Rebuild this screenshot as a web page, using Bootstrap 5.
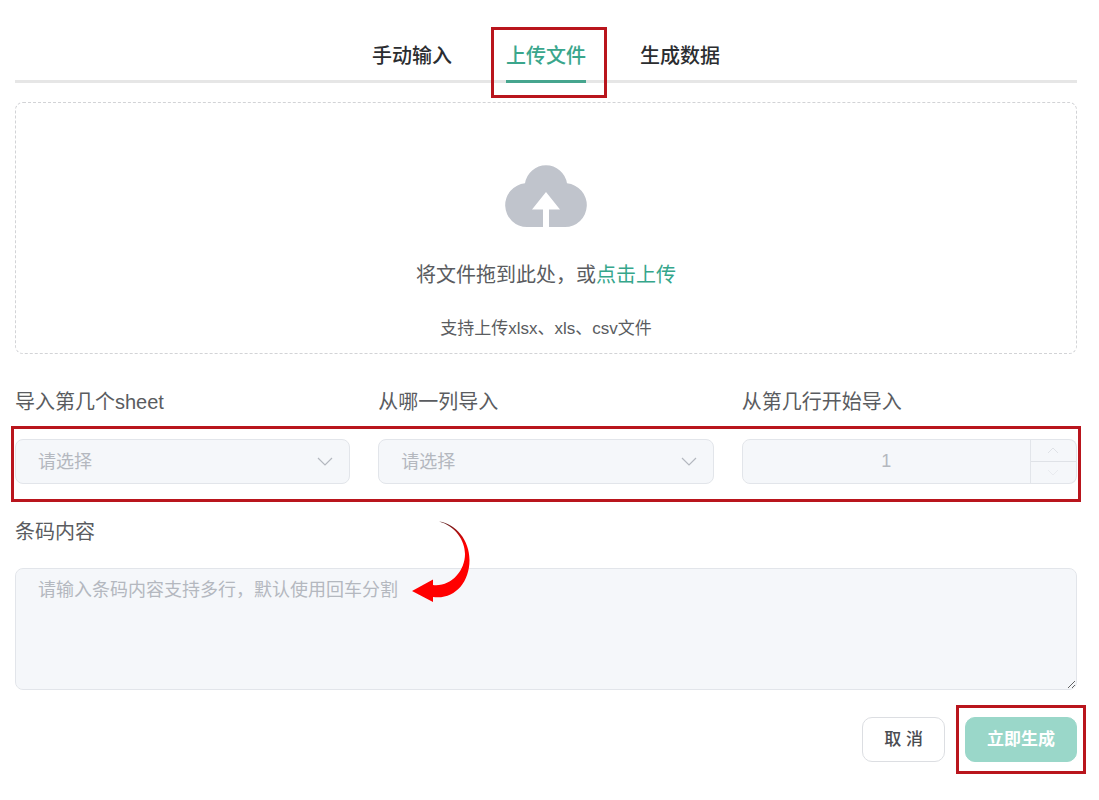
<!DOCTYPE html>
<html lang="zh-CN">
<head>
<meta charset="utf-8">
<meta name="viewport" content="width=device-width, initial-scale=1">
<title>上传文件</title>
<link href="https://cdn.jsdelivr.net/npm/bootstrap@5.3.0/dist/css/bootstrap.min.css" rel="stylesheet">
<style>
  body { font-family: "Liberation Sans", "Noto Sans CJK SC", sans-serif; font-size: 20px; line-height: 28px; color: #5a5c60; background: #fff; }
  .page { padding: 27px 22px 24px 15px; }
  .tab-bar { gap: 54px; box-shadow: inset 0 -3px #e6e6e6; }
  .tab-bar .nav-link { position: relative; padding: 15px 0 10px; border: 0; border-bottom: 3px solid transparent; border-radius: 0; color: #2b2d30; font-weight: 500; line-height: 28px; }
  .tab-bar .nav-link.active { color: #3aa68c; border-bottom-color: #46a58e; background: none; }
  .marker { position: absolute; border: 3px solid #b9151d; pointer-events: none; }
  .marker-tab { inset: 0 -21px -18px -15px; }
  .marker-fields { inset: auto -4px -18px -4px; height: 76px; }
  .marker-submit { inset: -12px -9px; }
  .drop-zone { margin-top: 19px; height: 252px; padding-top: 62px; border: 1px dashed #d2d3d6; border-radius: 8px; }
  .drop-zone a { color: #35a68b; text-decoration: none; }
  .drop-text { margin-top: 34px; }
  .drop-hint { margin-top: 26px; font-size: 17px; }
  .fields { margin-top: 34px; display: grid; grid-template-columns: repeat(3, 1fr); gap: 28px; }
  .field-label { display: block; margin-bottom: 23px; }
  .soft-control, .soft-control:disabled { height: 45px; padding: 0 22px; font-size: 18px; color: #b4b8bf; background-color: #f5f7fa; border: 1px solid #e2e5ea; border-radius: 8px; opacity: 1; }
  .form-select.soft-control { padding-top: 2px; background-image: url("data:image/svg+xml,%3Csvg xmlns='http://www.w3.org/2000/svg' viewBox='0 0 16 16'%3E%3Cpath d='M1 4l7 7 7-7' fill='none' stroke='%23b4b8bf' stroke-width='1.200'/%3E%3C/svg%3E"); background-size: 16px; background-position: right 16px center; }
  .stepper .soft-control { text-align: center; -moz-appearance: textfield; }
  .stepper input::-webkit-inner-spin-button { appearance: none; }
  .stepper-keys { width: 47px; border: 1px solid #e2e5ea; border-left: 0; border-radius: 0 8px 8px 0; background: #f5f7fa; }
  .stepper-keys button { flex: 1; display: flex; align-items: center; justify-content: center; padding: 0; border: 0; background: none; color: #dfe2e7; }
  .stepper-keys button + button { border-top: 1px solid #dfe2e7; color: #e9ebef; }
  .code-field { margin-top: 34px; }
  .code-field .field-label { margin-bottom: 22px; }
  textarea.soft-control, textarea.soft-control:disabled { display: block; height: 122px; padding: 8px 22px; }
  .soft-control::placeholder { color: #b4b8bf; opacity: 1; }
  .arrow-note { position: absolute; left: 396px; top: 3px; pointer-events: none; }
  .actions { margin-top: 27px; gap: 20px; }
  .actions .btn { height: 45px; padding: 0 21px; border-radius: 10px; font-size: 17px; font-weight: 500; }
  .btn-plain, .btn-plain:hover { color: #4a4c50; border: 1px solid #dcdee2; background: #fff; }
  .actions .btn-mint, .actions .btn-mint:disabled { color: #fff; border: 1px solid #9ad7c9; background: #9ad7c9; opacity: 1; font-weight: 700; }
</style>
</head>
<body>
<main class="page">
  <ul class="nav justify-content-center tab-bar" role="tablist">
    <li class="nav-item"><button class="nav-link bg-transparent" type="button" role="tab">手动输入</button></li>
    <li class="nav-item"><button class="nav-link active" type="button" role="tab" aria-selected="true">上传文件<span class="marker marker-tab"></span></button></li>
    <li class="nav-item"><button class="nav-link bg-transparent" type="button" role="tab">生成数据</button></li>
  </ul>

  <section class="drop-zone d-flex flex-column align-items-center">
    <svg width="82" height="62" viewBox="0 0 82 62" aria-hidden="true">
      <path d="M20 18.300A21.250 21.250 0 0 1 62 18.300A21.900 21.900 0 0 1 60 62H44V44.500H55L41 27L27 44.500H38V62H22A21.900 21.900 0 0 1 20 18.300Z" fill="#c0c4cc"/>
    </svg>
    <div class="drop-text">将文件拖到此处，或<a href="#">点击上传</a></div>
    <div class="drop-hint">支持上传xlsx、xls、csv文件</div>
  </section>

  <form>
    <div class="fields position-relative">
      <div>
        <label class="field-label" for="sheet">导入第几个sheet</label>
        <select class="form-select soft-control" id="sheet" disabled><option>请选择</option></select>
      </div>
      <div>
        <label class="field-label" for="column">从哪一列导入</label>
        <select class="form-select soft-control" id="column" disabled><option>请选择</option></select>
      </div>
      <div>
        <label class="field-label" for="startRow">从第几行开始导入</label>
        <div class="input-group stepper flex-nowrap">
          <input class="form-control soft-control" id="startRow" type="number" value="1" disabled>
          <div class="stepper-keys d-flex flex-column">
            <button type="button" disabled aria-label="增加"><svg width="12" height="7" viewBox="0 0 12 7"><path d="M1 6l5-5 5 5" fill="none" stroke="currentColor"/></svg></button>
            <button type="button" disabled aria-label="减少"><svg width="12" height="7" viewBox="0 0 12 7"><path d="M1 1l5 5 5-5" fill="none" stroke="currentColor"/></svg></button>
          </div>
        </div>
      </div>
      <span class="marker marker-fields"></span>
    </div>

    <div class="code-field position-relative">
      <label class="field-label" for="codes">条码内容</label>
      <textarea class="form-control soft-control" id="codes" placeholder="请输入条码内容支持多行，默认使用回车分割" disabled></textarea>
      <svg class="arrow-note" width="60" height="82" viewBox="0 0 60 82" aria-hidden="true">
        <defs><linearGradient id="tail" x1="0" y1="0" x2="0" y2="1"><stop offset="0" stop-color="#5a2020"/><stop offset=".28" stop-color="#f00"/></linearGradient></defs>
        <path d="M28 .500C45 3 58.500 19 58.500 39C58.500 62 43 79 22 76V81L1 70L22 58.500V64C40 66 54 50 54 33C54 19 44 5 28 .500Z" fill="url(#tail)"/>
      </svg>
    </div>

    <div class="actions d-flex justify-content-end">
      <button type="button" class="btn btn-plain">取 消</button>
      <div class="position-relative">
        <button type="submit" class="btn btn-mint" disabled>立即生成</button>
        <span class="marker marker-submit"></span>
      </div>
    </div>
  </form>
</main>
<script src="https://cdn.jsdelivr.net/npm/bootstrap@5.3.0/dist/js/bootstrap.bundle.min.js"></script>
</body>
</html>
